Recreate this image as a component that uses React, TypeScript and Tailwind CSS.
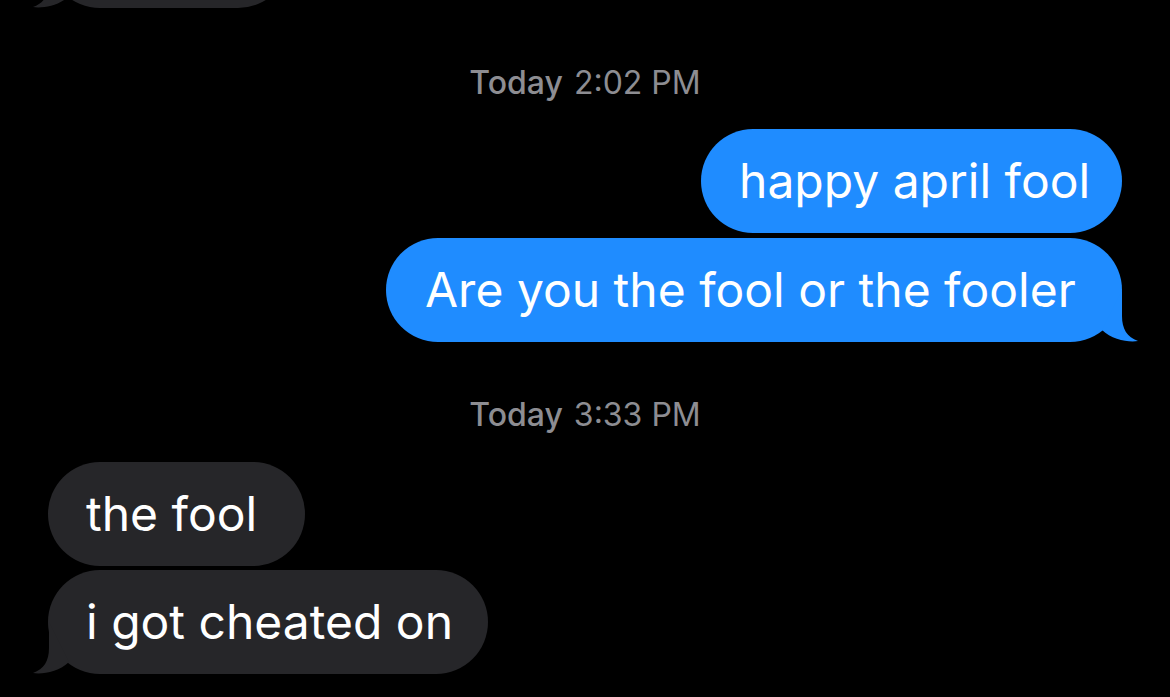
import React from "react";

type Side = "left" | "right";

interface IBubbleProps {
    side: Side;
    text?: string;
    tail?: boolean;
    className?: string;
}

function Tail({ side, color }: { side: Side; color: string }) {
    // tail drawn in a 40x60 box hanging off the bottom corner of the bubble
    if (side === "right") {
        return (
            <svg
                width="40"
                height="60"
                viewBox="0 0 40 60"
                className="absolute bottom-0 right-[-16px]"
            >
                <path d="M4 48 L24 8 L24 34 C24 47 29 55 40 59 C31 60.5 14 58 4 48 Z" fill={color} />
            </svg>
        );
    }
    return (
        <svg
            width="40"
            height="60"
            viewBox="0 0 40 60"
            className="absolute bottom-0 left-[-15px]"
        >
            <path d="M36 48 L16 8 L16 34 C16 47 11 55 0 59 C9 60.5 26 58 36 48 Z" fill={color} />
        </svg>
    );
}

function Bubble({ side, text, tail, className = "" }: IBubbleProps) {
    const color = side === "right" ? "#1f8cff" : "#262629";
    return (
        <div
            className={`relative h-[104px] rounded-full flex items-center pl-[38px] text-[48px] text-white ${side === "right" ? "self-end mr-[48px] bg-[#1f8cff]" : "self-start ml-[48px] bg-[#262629]"} ${className}`}
        >
            {tail && <Tail side={side} color={color} />}
            <span className="relative whitespace-nowrap">{text}</span>
        </div>
    );
}

function Stamp({ time, className = "" }: { time: string; className?: string }) {
    return (
        <div className={`h-[38px] flex items-center justify-center text-[32px] text-[#8d8d92] ${className}`}>
            <span className="font-medium">Today</span>
            <span className="ml-[11px]">{time}</span>
        </div>
    );
}

export default function App() {
    return (
        <div className="w-[1170px] h-[697px] bg-black overflow-hidden font-['Inter','Roboto',sans-serif]">
            <div className="flex flex-col">
                <Bubble side="left" tail className="mt-[-96px] w-[242px]" />

                <Stamp time="2:02 PM" className="mt-[56px]" />

                <Bubble side="right" text="happy april fool" className="mt-[27px] w-[421px] pl-[37px]" />
                <Bubble side="right" text="Are you the fool or the fooler" tail className="mt-[5px] w-[736px] pl-[39px]" />

                <Stamp time="3:33 PM" className="mt-[54px]" />

                <Bubble side="left" text="the fool" className="mt-[28px] w-[257px]" />
                <Bubble side="left" text="i got cheated on" tail className="mt-[4px] w-[440px]" />
            </div>
        </div>
    );
}
